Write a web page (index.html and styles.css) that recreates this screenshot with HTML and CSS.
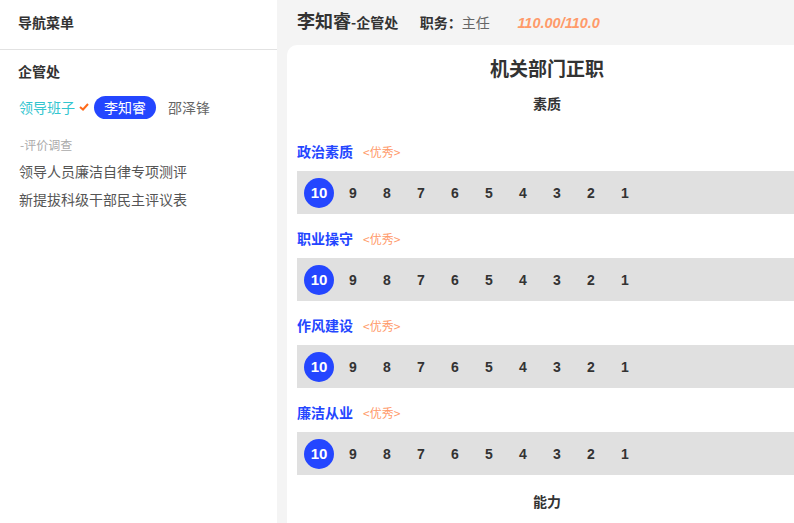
FILE: index.html
```html
<!DOCTYPE html>
<html lang="zh-CN">
<head>
  <meta charset="UTF-8">
  <title>机关部门正职</title>
  <link rel="stylesheet" href="styles.css">
</head>
<body>
  <div class="layout">
    <aside class="sidebar">
      <div class="side-title">导航菜单</div>
      <div class="side-body">
        <div class="dept">企管处</div>
        <div class="group">
          <span class="group-name">领导班子</span>
          <svg class="check" width="10" height="8" viewBox="0 0 10 8"><path d="M1 4 L4 6.5 L9 1" fill="none" stroke="#ff6a1a" stroke-width="2"/></svg>
          <span class="person active">李知睿</span>
          <span class="person">邵泽锋</span>
        </div>
        <div class="sub-title">-评价调查</div>
        <div class="link">领导人员廉洁自律专项测评</div>
        <div class="link">新提拔科级干部民主评议表</div>
      </div>
    </aside>

    <main class="main">
      <div class="header">
        <span class="name">李知睿</span><span class="name-dept">-企管处</span>
        <span class="duty-label">职务：</span><span class="duty">主任</span>
        <span class="score">110.00/110.0</span>
      </div>

      <div class="card">
        <h2 class="card-title">机关部门正职</h2>
        <div class="section-title">素质</div>

        <div class="item">
          <div class="item-label">政治素质<span class="grade">&lt;优秀&gt;</span></div>
          <div class="rate">
            <span class="num on">10</span><span class="num">9</span><span class="num">8</span><span class="num">7</span><span class="num">6</span><span class="num">5</span><span class="num">4</span><span class="num">3</span><span class="num">2</span><span class="num">1</span>
          </div>
        </div>
        <div class="item">
          <div class="item-label">职业操守<span class="grade">&lt;优秀&gt;</span></div>
          <div class="rate">
            <span class="num on">10</span><span class="num">9</span><span class="num">8</span><span class="num">7</span><span class="num">6</span><span class="num">5</span><span class="num">4</span><span class="num">3</span><span class="num">2</span><span class="num">1</span>
          </div>
        </div>
        <div class="item">
          <div class="item-label">作风建设<span class="grade">&lt;优秀&gt;</span></div>
          <div class="rate">
            <span class="num on">10</span><span class="num">9</span><span class="num">8</span><span class="num">7</span><span class="num">6</span><span class="num">5</span><span class="num">4</span><span class="num">3</span><span class="num">2</span><span class="num">1</span>
          </div>
        </div>
        <div class="item">
          <div class="item-label">廉洁从业<span class="grade">&lt;优秀&gt;</span></div>
          <div class="rate">
            <span class="num on">10</span><span class="num">9</span><span class="num">8</span><span class="num">7</span><span class="num">6</span><span class="num">5</span><span class="num">4</span><span class="num">3</span><span class="num">2</span><span class="num">1</span>
          </div>
        </div>

        <div class="section-title next">能力</div>
      </div>
    </main>
  </div>
</body>
</html>
```

FILE: styles.css
```css
html, body {
  margin: 0;
  padding: 0;
  height: 100%;
  overflow: hidden;
}
body {
  font-family: "Noto Sans CJK SC", "Liberation Sans", sans-serif;
  color: #333;
  background-color: #f4f4f4;
}
.layout {
  display: flex;
  height: 100%;
}
.sidebar {
  width: 277px;
  flex-shrink: 0;
  background-color: #fff;
}
.side-title {
  height: 49px;
  line-height: 44px;
  padding-left: 18px;
  font-size: 14px;
  font-weight: bold;
  border-bottom: 1px solid #e2e2e2;
}
.side-body {
  padding: 11px 0 0 18px;
}
.dept {
  font-size: 14px;
  font-weight: bold;
  line-height: 20px;
}
.group {
  display: flex;
  align-items: center;
  margin-top: 14px;
  height: 24px;
  font-size: 14px;
}
.group-name {
  color: #33c5cf;
  margin-left: 1px;
}
.check {
  margin: 0 5px 0 4px;
}
.person {
  color: #666;
  line-height: 23px;
  padding: 0 12px 0 0;
}
.person.active {
  background-color: #2446ff;
  color: #fff;
  border-radius: 12px;
  padding: 0 10px;
  margin-right: 12px;
}
.sub-title {
  margin-top: 17px;
  padding-left: 2px;
  font-size: 12px;
  color: #aaa;
  line-height: 18px;
  height: 18px;
}
.link {
  font-size: 14px;
  color: #555;
  line-height: 28px;
  height: 28px;
  padding-left: 1px;
}
.sub-title + .link {
  margin-top: 3px;
}
.main {
  padding-left: 10px;
  flex-shrink: 0;
}
.header {
  height: 45px;
  line-height: 40px;
  padding-left: 10px;
  white-space: nowrap;
}
.name {
  font-size: 18px;
  font-weight: bold;
}
.name-dept {
  font-size: 14px;
  font-weight: bold;
}
.duty-label {
  font-size: 14px;
  font-weight: bold;
  margin-left: 18px;
}
.duty {
  font-size: 14px;
  color: #666;
}
.score {
  font-family: "Liberation Sans", sans-serif;
  font-size: 14.5px;
  font-weight: bold;
  font-style: italic;
  color: #ff9a6a;
  margin-left: 24px;
}
.card {
  width: 500px;
  padding: 10px 10px 20px 10px;
  background-color: #fff;
  border-radius: 10px 10px 0 0;
  height: 600px;
}
.card-title {
  margin: 0;
  text-align: center;
  font-size: 19px;
  line-height: 26px;
  height: 26px;
}
.section-title {
  margin-top: 12px;
  text-align: center;
  font-size: 14px;
  font-weight: bold;
  line-height: 20px;
  height: 20px;
}
.section-title.next {
  margin-top: 12px;
}
.section-title + .item {
  margin-top: 30px;
}
.item {
  margin-bottom: 16px;
}
.item-label {
  font-size: 14px;
  font-weight: bold;
  color: #2446ff;
  line-height: 17px;
  height: 20px;
}
.grade {
  font-size: 12px;
  font-weight: normal;
  color: #ff9a6a;
  margin-left: 10px;
}
.rate {
  margin-top: 8px;
  height: 43px;
  background-color: #e0e0e0;
  display: flex;
  align-items: center;
  gap: 4px;
  padding-left: 7px;
}
.num {
  width: 30px;
  height: 30px;
  line-height: 30px;
  text-align: center;
  font-family: "Liberation Sans", sans-serif;
  font-size: 14px;
  font-weight: bold;
  color: #333;
}
.num.on {
  background-color: #2446ff;
  color: #fff;
  border-radius: 50%;
  font-size: 15px;
}
```
